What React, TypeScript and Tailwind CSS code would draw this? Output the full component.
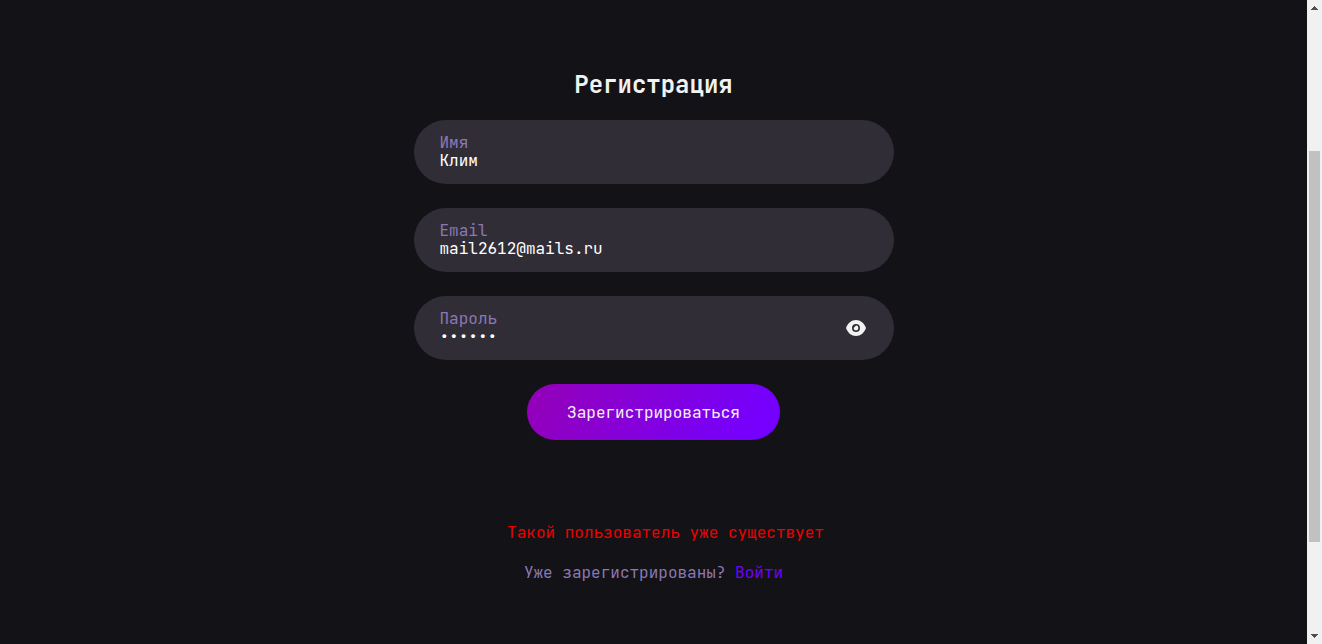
import { useState } from "react";

type FieldProps = {
  id: string;
  label: string;
  type: string;
  value: string;
  onChange: (value: string) => void;
  children?: React.ReactNode;
};

function Field({ id, label, type, value, onChange, children }: FieldProps) {
  return (
    <div className="flex h-16 w-full items-center rounded-[32px] bg-[#312d37] px-[26px]">
      <div className="flex min-w-0 flex-1 flex-col">
        <label htmlFor={id} className="text-base leading-[18px] text-[#8b78b3]">
          {label}
        </label>
        <input
          id={id}
          type={type}
          value={value}
          onChange={(e) => onChange(e.target.value)}
          className="h-[18px] w-full bg-transparent text-base leading-[18px] text-white outline-none"
        />
      </div>
      {children}
    </div>
  );
}

function EyeIcon() {
  return (
    <svg width="24" height="24" viewBox="0 0 24 24" fill="none" aria-hidden="true">
      <path
        fillRule="evenodd"
        clipRule="evenodd"
        d="M12 4C7.5 4 3.8 7 2 12C3.8 17 7.5 20 12 20C16.5 20 20.2 17 22 12C20.2 7 16.5 4 12 4ZM12 8A4 4 0 1 1 12 16A4 4 0 1 1 12 8Z"
        fill="#f2f2f2"
      />
      <path d="M12 9.6A2.4 2.4 0 1 1 9.6 12L10.8 10.8Z" fill="#f2f2f2" />
    </svg>
  );
}

function ScrollTrack() {
  return (
    <div aria-hidden="true" className="flex w-[15px] shrink-0 flex-col items-center bg-[#f1f1f1]">
      <svg width="15" height="17" viewBox="0 0 15 17" shapeRendering="crispEdges">
        <path d="M7 6h1v1h1v1h1v1h1v1H4V9h1V8h1V7h1z" fill="#505050" />
      </svg>
      <div className="flex w-full flex-1 flex-col items-center">
        <div className="flex-[134]" />
        <div className="w-[11px] flex-[391] bg-[#c1c1c1]" />
        <div className="flex-[85]" />
      </div>
      <svg width="15" height="17" viewBox="0 0 15 17" shapeRendering="crispEdges">
        <path d="M4 7h7v1h-1v1H9v1H8v1H7v-1H6V9H5V8H4z" fill="#505050" />
      </svg>
    </div>
  );
}

export default function App() {
  const [name, setName] = useState("Клим");
  const [email, setEmail] = useState("mail2612@mails.ru");
  const [password, setPassword] = useState("qwerty");
  const [visible, setVisible] = useState(false);

  return (
    <div className="flex min-h-screen bg-[#131217] font-['JetBrains_Mono','DejaVu_Sans_Mono',monospace] text-base">
      <main className="flex flex-1 flex-col items-center pt-[68px]">
        <h1 className="text-2xl leading-[34px] font-semibold text-[#f2f2f2]">Регистрация</h1>
        <form
          className="mt-[18px] flex w-full max-w-[480px] flex-col items-center gap-6"
          onSubmit={(e) => e.preventDefault()}
        >
          <Field id="name" label="Имя" type="text" value={name} onChange={setName} />
          <Field id="email" label="Email" type="email" value={email} onChange={setEmail} />
          <Field
            id="password"
            label="Пароль"
            type={visible ? "text" : "password"}
            value={password}
            onChange={setPassword}
          >
            <button
              type="button"
              aria-label="Показать пароль"
              onClick={() => setVisible(!visible)}
              className="shrink-0 cursor-pointer"
            >
              <EyeIcon />
            </button>
          </Field>
          <button
            type="submit"
            className="cursor-pointer rounded-[28px] bg-linear-[120deg,#9500b6,#7500ff_90%] px-10 pt-[18px] pb-4 leading-[22px] text-[#f2f2f2]"
          >
            Зарегистрироваться
          </button>
        </form>
        <p role="alert" className="mt-[82px] pl-6 leading-[22px] text-[#ee0000]">
          Такой пользователь уже существует
        </p>
        <p className="mt-[18px] leading-[22px] text-[#8b78b3]">
          Уже зарегистрированы?{" "}
          <a href="#login" className="text-[#7500ff]">
            Войти
          </a>
        </p>
      </main>
      <ScrollTrack />
    </div>
  );
}
